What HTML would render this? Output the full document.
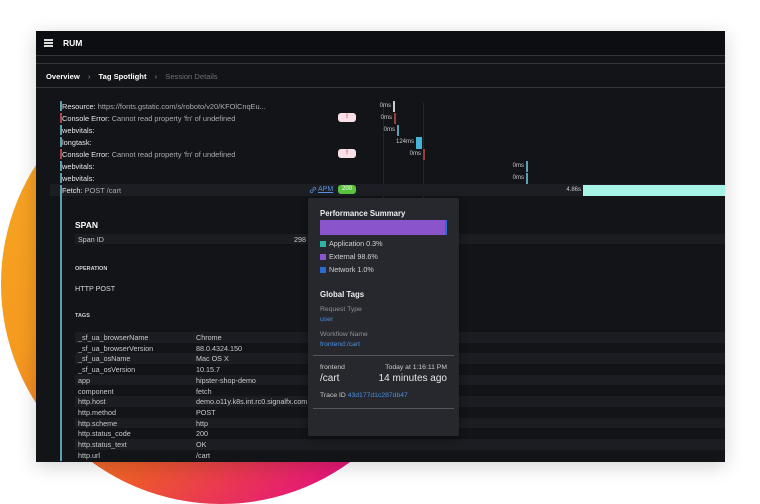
<!DOCTYPE html>
<html><head><meta charset="utf-8"><style>
*{margin:0;padding:0;box-sizing:border-box}
body{width:760px;height:500px;background:#fff;position:relative;overflow:hidden;font-family:"Liberation Sans",sans-serif;color:#d8d9dc;font-size:7px}
.circle{position:absolute;left:1px;top:64px;width:440px;height:440px;border-radius:50%;background:linear-gradient(135deg,#f7a823 0%,#f59a1f 35%,#ee5a2c 62%,#e5157a 85%,#d9007f 100%)}
.win{position:absolute;left:36px;top:31px;width:689px;height:431px;background:#131418;overflow:hidden;box-shadow:0 4px 18px rgba(0,0,0,.18)}
.a{position:absolute;white-space:nowrap}
.top{position:absolute;left:0;top:0;width:689px;height:25px;background:#0d0e11;border-bottom:1px solid #34353a}
.band{position:absolute;left:0;top:32px;width:689px;height:25px;border-top:1px solid #34353a;border-bottom:1px solid #34353a;background:#131418}
.lbar{position:absolute;left:24px;width:2px;height:10px}
.row{position:absolute;left:26px;font-size:7.4px;color:#e6e7ea}
.row span{color:#a9abb1}
.badge{position:absolute;left:302px;width:18px;height:9px;background:#f9dfe6;border-radius:3px;color:#c4475e;font-size:6px;text-align:center;line-height:9px;font-weight:bold}
.ms{position:absolute;font-size:6px;color:#c8c9cc;text-align:right;width:40px}
.mk{position:absolute;width:1.5px;height:11px}
.stripe{position:absolute;left:39px;width:650px;height:10.7px;background:#1c1d22}
.tk{position:absolute;left:42px;font-size:7.2px;color:#c9cacd}
.tv{position:absolute;left:160px;font-size:7.2px;color:#c9cacd}
.tip{position:absolute;left:272px;top:167px;width:151px;height:238px;background:#27282d;border-radius:2px;box-shadow:0 2px 8px rgba(0,0,0,.5)}
.sw{display:inline-block;width:6px;height:6px;margin-right:3px;vertical-align:-1px}
</style></head><body>
<div class="circle"></div>
<div class="win">
 <div class="top">
  <div class="a" style="left:8px;top:8px;width:9px;height:1.5px;background:#ddd;box-shadow:0 3px 0 #ddd,0 6px 0 #ddd"></div>
  <div class="a" style="left:27px;top:7px;font-size:8.5px;font-weight:bold;color:#fff">RUM</div>
 </div>
 <div class="band">
  <div class="a" style="left:10px;top:8px;font-size:7.6px;font-weight:bold;color:#fff">Overview <span style="color:#999;font-weight:normal;margin:0 6px">›</span> Tag Spotlight <span style="color:#999;font-weight:normal;margin:0 6px">›</span> <span style="color:#6d6f75;font-weight:normal">Session Details</span></div>
 </div>
 <div class="a" style="left:347px;top:72px;width:1px;height:100px;background:#26272c"></div>
 <div class="a" style="left:387px;top:72px;width:1px;height:100px;background:#26272c"></div>
 <div class="a" style="left:14px;top:153px;width:675px;height:12px;background:#1d1e23"></div>
 <div class="lbar" style="top:70px;background:#5ea0b3"></div><div class="row" style="top:71px">Resource: <span>https://fonts.gstatic.com/s/roboto/v20/KFOlCnqEu...</span></div>
 <div class="lbar" style="top:82px;background:#b0464f"></div><div class="row" style="top:83px">Console Error: <span>Cannot read property 'fn' of undefined</span></div>
 <div class="lbar" style="top:94px;background:#5ea0b3"></div><div class="row" style="top:95px">webvitals:</div>
 <div class="lbar" style="top:106px;background:#5ea0b3"></div><div class="row" style="top:107px">longtask:</div>
 <div class="lbar" style="top:118px;background:#b0464f"></div><div class="row" style="top:119px">Console Error: <span>Cannot read property 'fn' of undefined</span></div>
 <div class="lbar" style="top:130px;background:#5ea0b3"></div><div class="row" style="top:131px">webvitals:</div>
 <div class="lbar" style="top:142px;background:#5ea0b3"></div><div class="row" style="top:143px">webvitals:</div>
 <div class="lbar" style="top:154px;background:#5ea0b3;height:276px"></div><div class="row" style="top:155px">Fetch: <span>POST /cart</span></div>
 <div class="badge" style="top:82px">!</div>
 <div class="badge" style="top:118px">!</div>
 <svg class="a" style="left:273px;top:155px" width="8" height="8" viewBox="0 0 8 8"><path d="M3.2 4.8L4.8 3.2M2.6 3.6L1.6 4.6a1.2 1.2 0 0 0 1.8 1.8l1-1M5.4 4.4l1-1a1.2 1.2 0 0 0-1.8-1.8l-1 1" stroke="#5a93e0" stroke-width=".8" fill="none"/></svg>
 <div class="a" style="left:282px;top:155px;font-size:7px;color:#5a93e0;text-decoration:underline">APM</div>
 <div class="a" style="left:302px;top:154px;width:18px;height:9px;background:#5cc33f;border-radius:3px;color:#fff;font-size:6px;text-align:center;line-height:9px">200</div>
 <div class="ms" style="left:315px;top:72px">0ms</div><div class="mk" style="left:357px;top:70px;background:#ccc"></div>
 <div class="ms" style="left:316px;top:84px">0ms</div><div class="mk" style="left:358px;top:82px;background:#9a3b3f"></div>
 <div class="ms" style="left:319px;top:96px">0ms</div><div class="mk" style="left:361px;top:94px;background:#5ea0b3"></div>
 <div class="ms" style="left:338px;top:108px">124ms</div><div class="a" style="left:380px;top:106px;width:6px;height:12px;background:#46b4d8"></div>
 <div class="ms" style="left:345px;top:120px">0ms</div><div class="mk" style="left:387px;top:118px;background:#9a3b3f"></div>
 <div class="ms" style="left:448px;top:132px">0ms</div><div class="mk" style="left:490px;top:130px;background:#5ea0b3"></div>
 <div class="ms" style="left:448px;top:144px">0ms</div><div class="mk" style="left:490px;top:142px;background:#5ea0b3"></div>
 <div class="ms" style="left:505px;top:156px">4.86s</div><div class="a" style="left:547px;top:154px;width:142px;height:11px;background:#a6f2e4"></div>
 <div class="a" style="left:39px;top:189px;font-size:8.5px;font-weight:bold;color:#fff">SPAN</div>
 <div class="a" style="left:39px;top:203px;width:650px;height:10px;background:#1c1d22"></div>
 <div class="a" style="left:42px;top:204px;font-size:7.2px;color:#c9cacd">Span ID</div>
 <div class="a" style="left:258px;top:204px;font-size:7.2px;color:#c9cacd">298</div>
 <div class="a" style="left:39px;top:235px;font-size:5.5px;font-weight:bold;color:#d0d1d4">OPERATION</div>
 <div class="a" style="left:39px;top:253px;font-size:7.2px;color:#d8d9dc">HTTP POST</div>
 <div class="a" style="left:39px;top:282px;font-size:5.5px;font-weight:bold;color:#d0d1d4">TAGS</div>
 <div class="stripe" style="top:301px"></div><div class="stripe" style="top:322.4px"></div><div class="stripe" style="top:343.8px"></div><div class="stripe" style="top:365.2px"></div><div class="stripe" style="top:386.6px"></div><div class="stripe" style="top:408px"></div>
 <div class="tk" style="top:302px">_sf_ua_browserName</div><div class="tv" style="top:302px">Chrome</div>
 <div class="tk" style="top:312.7px">_sf_ua_browserVersion</div><div class="tv" style="top:312.7px">88.0.4324.150</div>
 <div class="tk" style="top:323.4px">_sf_ua_osName</div><div class="tv" style="top:323.4px">Mac OS X</div>
 <div class="tk" style="top:334.1px">_sf_ua_osVersion</div><div class="tv" style="top:334.1px">10.15.7</div>
 <div class="tk" style="top:344.8px">app</div><div class="tv" style="top:344.8px">hipster-shop-demo</div>
 <div class="tk" style="top:355.5px">component</div><div class="tv" style="top:355.5px">fetch</div>
 <div class="tk" style="top:366.2px">http.host</div><div class="tv" style="top:366.2px">demo.o11y.k8s.int.rc0.signalfx.com</div>
 <div class="tk" style="top:376.9px">http.method</div><div class="tv" style="top:376.9px">POST</div>
 <div class="tk" style="top:387.6px">http.scheme</div><div class="tv" style="top:387.6px">http</div>
 <div class="tk" style="top:398.3px">http.status_code</div><div class="tv" style="top:398.3px">200</div>
 <div class="tk" style="top:409px">http.status_text</div><div class="tv" style="top:409px">OK</div>
 <div class="tk" style="top:419.7px">http.url</div><div class="tv" style="top:419.7px">/cart</div>
 <div class="tip">
  <div class="a" style="left:12px;top:11px;font-size:7.8px;font-weight:bold;color:#eee">Performance Summary</div>
  <div class="a" style="left:12px;top:22px;width:127px;height:15px;background:#8a55cc;border-right:2px solid #2a6bd0"></div>
  <div class="a" style="left:12px;top:41px;font-size:7.2px;color:#d0d1d4"><span class="sw" style="background:#2bb3a3"></span>Application 0.3%</div>
  <div class="a" style="left:12px;top:54px;font-size:7.2px;color:#d0d1d4"><span class="sw" style="background:#8a55cc"></span>External 98.6%</div>
  <div class="a" style="left:12px;top:67px;font-size:7.2px;color:#d0d1d4"><span class="sw" style="background:#2a6bd0"></span>Network 1.0%</div>
  <div class="a" style="left:12px;top:92px;font-size:7.8px;font-weight:bold;color:#eee">Global Tags</div>
  <div class="a" style="left:12px;top:108px;font-size:6.8px;color:#8e9096">Request Type</div>
  <div class="a" style="left:12px;top:118px;font-size:6.8px;color:#4a8fe0">user</div>
  <div class="a" style="left:12px;top:133px;font-size:6.8px;color:#8e9096">Workflow Name</div>
  <div class="a" style="left:12px;top:143px;font-size:6.8px;color:#4a8fe0">frontend:/cart</div>
  <div class="a" style="left:5px;top:157px;width:141px;height:1px;background:#55565c"></div>
  <div class="a" style="left:12px;top:166px;font-size:6.8px;color:#ccc">frontend</div>
  <div class="a" style="left:12px;top:175px;font-size:10px;color:#e8e8ea">/cart</div>
  <div class="a" style="right:12px;top:166px;font-size:6.8px;color:#ccc">Today at 1:16:11 PM</div>
  <div class="a" style="right:12px;top:175px;font-size:10px;color:#e8e8ea">14 minutes ago</div>
  <div class="a" style="left:12px;top:194px;font-size:6.8px;color:#ccc">Trace ID <span style="color:#4a8fe0">43d177d1c287db47</span></div>
  <div class="a" style="left:5px;top:210px;width:141px;height:1px;background:#55565c"></div>
 </div>
</div>
</body></html>
